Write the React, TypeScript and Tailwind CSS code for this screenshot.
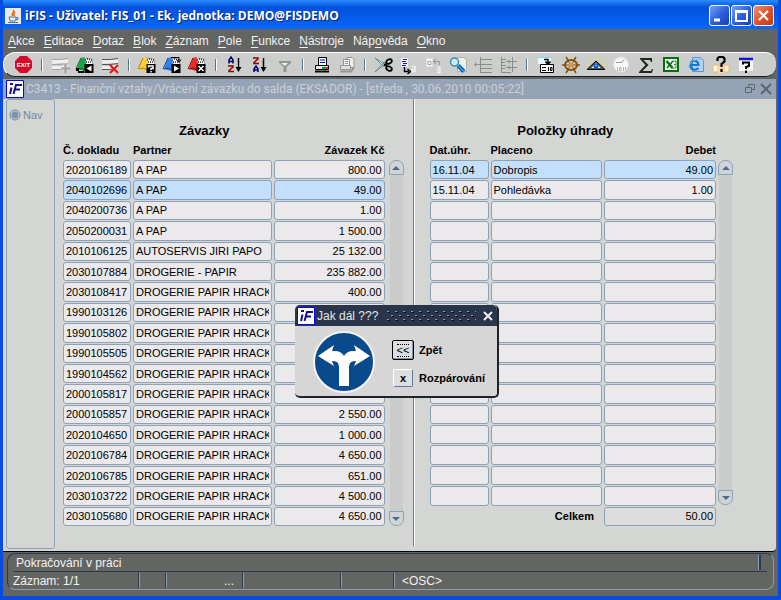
import type { ReactNode } from "react";

type DebtRow = [string, string, string];
type PaymentRow = [string, string, string];

const debts: DebtRow[] = [
  ["2020106189", "A PAP", "800.00"],
  ["2040102696", "A PAP", "49.00"],
  ["2040200736", "A PAP", "1.00"],
  ["2050200031", "A PAP", "1 500.00"],
  ["2010106125", "AUTOSERVIS JIRI PAPO", "25 132.00"],
  ["2030107884", "DROGERIE - PAPIR", "235 882.00"],
  ["2030108417", "DROGERIE PAPIR HRACK AV", "400.00"],
  ["1990103126", "DROGERIE PAPIR HRACK AV", ""],
  ["1990105802", "DROGERIE PAPIR HRACK AV", ""],
  ["1990105505", "DROGERIE PAPIR HRACK AV", ""],
  ["1990104562", "DROGERIE PAPIR HRACK AV", ""],
  ["2000105817", "DROGERIE PAPIR HRACK AV", ""],
  ["2000105857", "DROGERIE PAPIR HRACK AV", "2 550.00"],
  ["2020104650", "DROGERIE PAPIR HRACK AV", "1 000.00"],
  ["2020106784", "DROGERIE PAPIR HRACK AV", "4 650.00"],
  ["2020106785", "DROGERIE PAPIR HRACK AV", "651.00"],
  ["2030103722", "DROGERIE PAPIR HRACK AV", "4 500.00"],
  ["2030105680", "DROGERIE PAPIR HRACK AV", "4 650.00"],
];

const payments: PaymentRow[] = [
  ["16.11.04", "Dobropis", "49.00"],
  ["15.11.04", "Pohledávka", "1.00"],
  ...Array.from({ length: 15 }, () => ["", "", ""] as PaymentRow),
];

// Each menu label with the index of its access key
const menu: [string, number][] = [
  ["Akce", 0],
  ["Editace", 0],
  ["Dotaz", 0],
  ["Blok", 0],
  ["Záznam", 0],
  ["Pole", 0],
  ["Funkce", 0],
  ["Nástroje", 0],
  ["Nápověda", 3],
  ["Okno", 0],
];

function Folder({ color, dark, children }: { color: string; dark: string; children: ReactNode }) {
  return (
    <>
      <path d="M10 3l8 1 1 7-6 4z" fill="#fff" stroke="#555" strokeWidth="0.500" />
      <path d="M11 5h1M13 4h1M15 4.500h1M17 5h1M12 7h1M14 7h1M16 7h1" stroke="#222" strokeWidth="1.500" />
      <path d="M3 14L7 3l3-1 4 12-4 2z" fill={color} />
      <path d="M2 14l5-11M3 14l4-1 4 2" stroke={dark} fill="none" />
      <path d="M10.500 9h9v9h-9z" fill="#000" />
      {children}
    </>
  );
}

function Stripes({ line }: { line: string }) {
  return (
    <>
      <path d="M3 5h8l8-1v4h-8l-8 1zM3 11h8l8-1v4h-9l-7 1z" fill="#efefef" />
      <path d="M3 4.500h8l8-1M3 9.500h8l8-1M3 14.500h8l4-1" stroke={line} fill="none" />
    </>
  );
}

const groups: { name: string; art: ReactNode }[][] = [
  [
    {
      name: "Konec",
      art: (
        <>
          <path d="M8 1h7l5 5v7l-5 5H8l-5-5V6z" fill="#d6082a" />
          <text x="11.500" y="12" fontSize="6" fontWeight="700" textAnchor="middle" fill="#fff">
            EXIT
          </text>
        </>
      ),
    },
  ],
  [
    {
      name: "Nový záznam",
      art: (
        <>
          <Stripes line="#a5a6a5" />
          <path d="M15 8h3v4h4v3h-4v4h-3v-4h-3v-3h3z" fill="#a5a6a5" stroke="#e8e8e8" strokeWidth="0.500" />
        </>
      ),
    },
    {
      name: "Předchozí blok",
      art: (
        <Folder color="#18a649" dark="#086528">
          <path d="M17.500 10.500v6l-5-3z" fill="#fff" />
          <path d="M2 13h3v3h5v2H4v-2H2z" fill="#000" />
        </Folder>
      ),
    },
    {
      name: "Smazat záznam",
      art: (
        <>
          <Stripes line="#525552" />
          <path d="M11 10l8 8M19 10l-8 8" stroke="#ef1010" strokeWidth="2" />
        </>
      ),
    },
  ],
  [
    {
      name: "Zadat dotaz",
      art: (
        <Folder color="#ffcf31" dark="#b57d08">
          <path d="M12.500 12.500V11h4.500v2.500h-2v1.500M15 16v1.500" stroke="#fff" strokeWidth="1.500" fill="none" />
        </Folder>
      ),
    },
    {
      name: "Provést dotaz",
      art: (
        <Folder color="#3182ef" dark="#103c9c">
          <path d="M13 10.500v6l5-3z" fill="#fff" />
          <path d="M10 2.500h8v4m-2.500-2l2.500 3 2-3" stroke="#000" fill="none" />
        </Folder>
      ),
    },
    {
      name: "Zrušit dotaz",
      art: (
        <Folder color="#ef2829" dark="#8c0808">
          <path d="M12.500 11l5 5M17.500 11l-5 5" stroke="#fff" strokeWidth="1.500" />
        </Folder>
      ),
    },
  ],
  [
    {
      name: "Třídit vzestupně",
      art: (
        <>
          <path d="M6 8.500V5l2-3 2 3v3.500M6 6.500h4" stroke="#00006b" strokeWidth="1.500" fill="none" />
          <path d="M5 11h5v1l-4 3.500v1h5" stroke="#8c0000" strokeWidth="1.500" fill="none" />
          <path d="M15.500 3v12" stroke="#000" strokeWidth="1.500" />
          <path d="M12.500 12h6l-3 5z" />
        </>
      ),
    },
    {
      name: "Třídit sestupně",
      art: (
        <>
          <path d="M5 3h5v1L6 7.500v1h5" stroke="#8c0000" strokeWidth="1.500" fill="none" />
          <path d="M6 17v-3l2-3 2 3v3M6 15h4" stroke="#00006b" strokeWidth="1.500" fill="none" />
          <path d="M15.500 3v12" stroke="#000" strokeWidth="1.500" />
          <path d="M12.500 12h6l-3 5z" />
        </>
      ),
    },
    {
      name: "Filtr",
      art: (
        <>
          <path d="M6 6h12v2l-4.500 4v5h-3v-5L6 8z" fill="#949694" />
          <path d="M8 8h7l-3 3z" fill="#efefef" />
        </>
      ),
    },
  ],
  [
    {
      name: "Tisk",
      art: (
        <>
          <path d="M8.500 2.500h8v8h-8z" fill="#fff" stroke="#000" />
          <path d="M10 5h5M10 7.500h5" stroke="#0000b5" />
          <path d="M5.500 10.500h13v4h-13z" fill="#e7e7e7" stroke="#000" />
          <path d="M5 16.500h14" stroke="#000" strokeWidth="2" />
          <path d="M12 12h3v2h-3z" fill="#18a618" />
          <path d="M15 12h3v2h-3z" fill="#ef2020" />
        </>
      ),
    },
    {
      name: "Tisk sestav",
      art: (
        <>
          <path d="M12 2.500h5l2 2v8h-7z" fill="#efefef" stroke="#949694" />
          <path d="M8.500 4.500h6v7h-6z" fill="#f7f7f7" stroke="#949694" />
          <path d="M10 6.500h3M10 8.500h3" stroke="#949694" />
          <path d="M5.500 10.500h10v4h-10z" fill="#dedfde" stroke="#949694" />
          <path d="M5 16.500h11l3-4" stroke="#949694" strokeWidth="2" fill="none" />
        </>
      ),
    },
  ],
  [
    {
      name: "Vyjmout",
      art: (
        <>
          <path d="M3 3l11 7-2 2zM3 17L14 8l-2-1z" fill="#d6f3f7" stroke="#638e94" />
          <path d="M12 9.500l3 1" stroke="#000" strokeWidth="2" />
          <ellipse cx="17" cy="6.500" rx="3" ry="2" transform="rotate(-30 17 6.500)" fill="none" stroke="#000" strokeWidth="1.800" />
          <ellipse cx="17" cy="13.500" rx="3" ry="2" transform="rotate(30 17 13.500)" fill="none" stroke="#000" strokeWidth="1.800" />
        </>
      ),
    },
    {
      name: "Kopírovat",
      art: (
        <>
          <path d="M4 3h7v9H4z" fill="#f0f0ff" />
          <path d="M6 4.500h4M5 6.500h4M6 8.500h4M5 10.500h4" stroke="#1818de" />
          <path d="M7.500 12v4.500H12M10.500 14l3 2.500-3 2.500" stroke="#000" strokeWidth="1.500" fill="none" />
          <path d="M15 11.500h3v5h-3v-2h3" stroke="#efefef" strokeWidth="1.500" fill="none" />
        </>
      ),
    },
    {
      name: "Vložit",
      art: (
        <>
          <path d="M4.500 3.500h6v8h-6z" fill="#f7f7f7" stroke="#dedfde" />
          <path d="M6 6.500h3v3H6z" stroke="#a5a6a5" fill="none" />
          <path d="M17.500 10V6.500H12M14 4l-3 2.500L14 9" stroke="#949694" fill="none" />
          <path d="M15 12.500h3v5h-3M15 15h3" stroke="#efefef" strokeWidth="1.500" fill="none" />
        </>
      ),
    },
    {
      name: "Náhled",
      art: (
        <>
          <path d="M10.500 2.500h6l3 2v12h-9z" fill="#efefe7" stroke="#b5b2a5" />
          <circle cx="7.500" cy="7" r="4" fill="#c6efff" stroke="#428aa5" strokeWidth="1.500" />
          <path d="M11 10.500l6 6" stroke="#0859b5" strokeWidth="4" />
          <path d="M11 10.500l6 6" stroke="#31a6f7" strokeWidth="1.500" />
        </>
      ),
    },
    {
      name: "Seznam",
      art: (
        <path d="M8.500 2v16M8 4.500h12M8 9.500h12M8 13.500h12M8 17.500h12M2 9.500h6M3.500 7.500v4" stroke="#8b8d8b" fill="none" />
      ),
    },
    {
      name: "Strom",
      art: (
        <path d="M4.500 2v16M4 4.500h5M4 7.500h4M4 10.500h5M4 13.500h4M4 17.500h5M15.500 2v15M9 6.500h11M9 12.500h11M9 17.500h5M12 4.500v4M12 10.500v4" stroke="#8b8d8b" fill="none" />
      ),
    },
  ],
  [
    {
      name: "Formulář",
      art: (
        <>
          <path d="M4 2h13v7H4z" fill="#e7f7ff" />
          <path d="M4 2.500h13" stroke="#8cd3f7" />
          <path d="M10 4.500h4v4M11.500 6.500l2.500 3 2.500-3" stroke="#000" strokeWidth="1.500" fill="none" />
          <path d="M6.500 9.500h13v8h-13z" fill="#fff" stroke="#000" />
          <path d="M8 12.500h4M8 15.500h4M14.500 12v4M16.500 12.500h1.500v3h-1.500z" stroke="#000" fill="none" />
        </>
      ),
    },
    {
      name: "Navigace",
      art: (
        <>
          <path d="M3 10h18M7 2l10 16M17 2L7 18" stroke="#84510a" strokeWidth="1.500" />
          <ellipse cx="12" cy="10" rx="6" ry="5" fill="#cccecc" stroke="#84510a" strokeWidth="2" />
          <path d="M7 10h10M9 6l6 8M15 6l-6 8" stroke="#84510a" />
          <circle cx="12" cy="10" r="2" fill="#de9a42" />
        </>
      ),
    },
    {
      name: "Zobrazit",
      art: (
        <>
          <path d="M12 2v3M5 4l3 3M19 4l-3 3M3 9l3 1M21 9l-3 1" stroke="#efdb21" />
          <path d="M3 14.500L12 6l9 8.500z" fill="#52595a" stroke="#000" />
          <path d="M7.500 13L12 8l4.500 5z" fill="#fff" />
          <circle cx="12" cy="11" r="2.500" fill="#0051d6" />
          <circle cx="12" cy="10.500" r="1" fill="#5be0ff" />
        </>
      ),
    },
    {
      name: "Čas",
      art: (
        <>
          <circle cx="12" cy="9.500" r="7.500" fill="#f7f7f7" stroke="#dedfde" />
          <path d="M7 7.500h6l2-3" stroke="#9c9e9c" fill="none" />
          <path d="M8.500 12v4M10.500 12.500H12v3h-1.500zM14.500 12v4M16.500 12v3" stroke="#b5b6b5" fill="none" />
        </>
      ),
    },
    {
      name: "Součet",
      art: (
        <>
          <path d="M6 3h12v4h-1l-1-2H9.500l5 5-6 6H17l1-2h1l-1 4H5v-1l6.500-7L6 4z" fill="#212421" />
        </>
      ),
    },
    {
      name: "Excel",
      art: (
        <>
          <path d="M5 3h14v13H5z" fill="#f0f8f0" stroke="#086d10" strokeWidth="2" />
          <path d="M7.500 6l6 7" stroke="#086d10" strokeWidth="2.500" />
          <path d="M14 6l-6 7" stroke="#086d10" strokeWidth="1.500" />
          <path d="M14 6h3v7h-4M15 9.500h2" stroke="#318a39" fill="none" />
        </>
      ),
    },
    {
      name: "Internet",
      art: (
        <>
          <path d="M8.500 2.500h8l3 3v11h-11z" fill="#b5d3f7" stroke="#6b92c6" />
          <path d="M14.500 13c-3 3-8 2-8-2.500 0-6 8-6 8-.5h-8" fill="none" stroke="#1879c6" strokeWidth="2.200" />
          <path d="M4 13C5 8 11 4 17 4" fill="none" stroke="#7bc3ef" />
        </>
      ),
    },
    {
      name: "Nápověda k poli",
      art: (
        <>
          <path d="M4 10h5v7H4zM15 10h5v7h-5z" fill="#fff3de" stroke="#efb673" />
          <path d="M9 11h6v7H9z" fill="#f7d7a5" />
          <path d="M8.500 6V3.500L10 2h4l1.500 1.500v3L12.500 9v3M12.500 14v3" stroke="#000" strokeWidth="2.200" fill="none" />
        </>
      ),
    },
    {
      name: "Nápověda",
      art: (
        <>
          <path d="M5 3h14v13H5z" fill="#f7f7f7" />
          <path d="M5 4h14" stroke="#1010ce" strokeWidth="2.500" />
          <path d="M9 9.500V7.500h6V11l-3 1v2M12 15.500v2.500" stroke="#000" strokeWidth="2" fill="none" />
        </>
      ),
    },
  ],
];

function Logo() {
  return (
    <svg viewBox="0 0 18 18" className="size-[18px] shrink-0" aria-hidden="true">
      <path d="M.5.5h17v17H.5z" fill="#fff" stroke="#0808e7" />
      <path d="M5.500 7.500L4 14M4 4h3" stroke="#10108c" strokeWidth="2" />
      <path d="M7.500 14l2.500-9h6M9 9.500h5" stroke="#10108c" strokeWidth="2" fill="none" />
    </svg>
  );
}

function WindowButton({ name, close, children }: { name: string; close?: boolean; children: ReactNode }) {
  return (
    <button
      aria-label={name}
      className={`size-[21px] rounded-[3px] border border-white ${
        close
          ? "bg-linear-to-br from-[#f0926f] via-[#e0532c] to-[#c23a12]"
          : "bg-linear-to-br from-[#7a9ef0] via-[#2e5fe0] to-[#1642b8]"
      }`}
    >
      <svg viewBox="0 0 19 19" className="size-full" fill="none" stroke="#fff" strokeWidth="2">
        {children}
      </svg>
    </button>
  );
}

function Cell({ label, value, width, right, active, total }: {
  label: string;
  value: string;
  width: string;
  right?: boolean;
  active?: boolean;
  total?: boolean;
}) {
  return (
    <td className={`flex p-0 ${width}`}>
      <input
        aria-label={label}
        defaultValue={value}
        readOnly={total}
        className={`h-full w-full min-w-0 rounded-[3px] border border-[#8ca2b8] px-[2px] outline-none ${
          right ? "text-right" : ""
        } ${active ? "bg-[#c3dffb]" : total ? "bg-[#dddddd]" : "bg-[#ebe9eb]"}`}
      />
    </td>
  );
}

function Scrollbar({ height }: { height: string }) {
  return (
    <div className={`flex w-[15px] shrink-0 flex-col ${height}`}>
      <button aria-label="Nahoru" className="flex h-[15px] items-center justify-center rounded-t-[7px] border border-[#8ca2b8] bg-[#d0d4d6]">
        <svg viewBox="0 0 8 4" className="h-1 w-2" fill="#4f6b8c">
          <path d="M0 4l4-4 4 4z" />
        </svg>
      </button>
      <div className="mx-px flex-1 bg-[#cacccb]" />
      <button aria-label="Dolů" className="flex h-[15px] items-center justify-center rounded-b-[7px] border border-[#8ca2b8] bg-[#d0d4d6]">
        <svg viewBox="0 0 8 4" className="h-1 w-2" fill="#4f6b8c">
          <path d="M0 0h8L4 4z" />
        </svg>
      </button>
    </div>
  );
}

function StatusCell({ width, children }: { width: string; children?: ReactNode }) {
  return (
    <div className={`flex h-[15px] items-center border-r border-[#8c9cb0] ${width}`}>
      <span className="flex h-full w-full items-center justify-end border-r border-[#2b394f] pr-2">{children}</span>
    </div>
  );
}

const head = "flex gap-[2px] text-left text-[11px] leading-[14px] font-bold";

export default function App() {
  return (
    <div className="relative flex min-h-screen flex-col border-x-[3px] border-b-4 border-[#0a4be0] bg-[#636563] font-['Liberation_Sans',Arial,sans-serif] text-[11px] text-black">
      <header className="flex h-[29px] items-center bg-linear-to-b from-[#2a8cff] via-[#0450dc] via-25% to-[#0568fb] pt-[2px] pr-1 pl-[2px]">
        <svg viewBox="0 0 16 16" className="size-4" aria-hidden="true">
          <path d="M0 0h16v16H0z" fill="#e8eaec" />
          <path d="M8 2c3 2-3 3 0 6M10 4c-2 1-1 2-1 4" stroke="#e76f18" strokeWidth="1.500" fill="none" />
          <path d="M4 9h7v2l-1 2H5zM11 9.500h2v2h-2" stroke="#4a769c" fill="none" />
          <path d="M3 14.500h10" stroke="#4a769c" />
        </svg>
        <h1 className="ml-1 flex-1 font-['Open_Sans','Noto_Sans',sans-serif] text-[12px] font-bold whitespace-nowrap text-white [text-shadow:1px_1px_1px_#06256e]">
          iFIS - Uživatel: FIS_01 - Ek. jednotka: DEMO@FISDEMO
        </h1>
        <div className="flex gap-[1px]">
          <WindowButton name="Minimalizovat"><path d="M4 14h6" strokeWidth="3" /></WindowButton>
          <WindowButton name="Maximalizovat"><path d="M4 5h11v10H4zM4 6h11" /></WindowButton>
          <WindowButton name="Zavřít" close><path d="M5 5l9 9M14 5l-9 9" /></WindowButton>
        </div>
      </header>

      <nav className="flex h-[23px] items-center gap-[9px] pl-[5px] text-[12px] text-[#f2f2f2]">
        {menu.map(([label, key]) => (
          <button key={label}>
            {label.slice(0, key)}
            <u className="underline-offset-2">{label[key]}</u>
            {label.slice(key + 1)}
          </button>
        ))}
      </nav>

      <div role="toolbar" className="mr-[2px] flex h-[25px] items-center rounded-l-[12px] rounded-r-[10px] border-t border-b border-l border-t-white border-b-[#182030] border-l-white bg-[#cccecc] pl-[7px]">
        {groups.map((group, i) => (
          <div key={i} className="flex items-center">
            {i > 0 && (
              <span className="flex w-3 justify-center">
                <span className="h-3 w-[2px] border-r border-l border-r-white border-l-[#5a738c]" />
              </span>
            )}
            {group.map(({ name, art }) => (
              <button key={name} aria-label={name} title={name} className="flex w-[25px] justify-center">
                <svg viewBox="0 0 24 20" className="h-5 w-6">{art}</svg>
              </button>
            ))}
          </div>
        ))}
      </div>

      <div className="mt-[2px] mr-[2px] flex h-5 items-center bg-[#94a3b6] pr-1 pl-[3px]">
        <Logo />
        <h2 className="ml-[2px] flex-1 font-[Roboto,'Liberation_Sans',sans-serif] text-[12px] whitespace-nowrap text-[#cdd1d4]">
          C3413 - Finanční vztahy/Vrácení závazku do salda (EKSADOR) - [středa , 30.06.2010 00:05:22]
        </h2>
        <button aria-label="Obnovit okno">
          <svg viewBox="0 0 12 12" className="size-3" fill="none" stroke="#5f666b">
            <path d="M4.500 4V1.500h6v5H8M1.500 4.500h6v5h-6z" />
          </svg>
        </button>
        <button aria-label="Zavřít okno" className="ml-1">
          <svg viewBox="0 0 12 12" className="size-3" stroke="#5f666b" strokeWidth="2">
            <path d="M1 1l10 10M11 1L1 11" />
          </svg>
        </button>
      </div>

      <main className="mr-[2px] flex flex-1 rounded-br-[4px] border-b border-black bg-[#d4d6d4] pl-[3px]">
        <aside className="mb-[2px] w-[49px] shrink-0 rounded-[3px] border border-[#8ca2b8] pt-[7px] pl-[2px]">
          <button className="flex items-center gap-[2px] text-[#71869c]">
            <svg viewBox="0 0 12 12" className="size-3">
              <circle cx="6" cy="6" r="5" fill="#c8d2dc" stroke="#71869c" />
              <circle cx="6" cy="6" r="3.500" fill="#7f93aa" />
            </svg>
            Nav
          </button>
        </aside>

        <section className="mb-[5px] flex-[340] border-r border-[#777b7b] pt-6 pr-[9px] pl-2">
          <h3 className="mr-[58px] text-center text-[13px] leading-4 font-bold">Závazky</h3>
          <div className="mt-1 flex items-end gap-1">
            <table className="flex min-w-0 flex-1 flex-col">
              <thead>
                <tr className={head}>
                  <th className="w-[68px]">Č. dokladu</th>
                  <th className="flex-1">Partner</th>
                  <th className="w-[111px] text-right">Závazek Kč</th>
                </tr>
              </thead>
              <tbody className="mt-[3px] flex h-[366px] flex-col gap-px">
                {debts.map((r, i) => (
                  <tr key={r[0]} className="flex flex-1 gap-[2px]">
                    <Cell label="Č. dokladu" value={r[0]} width="w-[68px]" active={i === 1} />
                    <Cell label="Partner" value={r[1]} width="flex-1 min-w-0" active={i === 1} />
                    <Cell label="Závazek Kč" value={r[2]} width="w-[111px]" right active={i === 1} />
                  </tr>
                ))}
              </tbody>
            </table>
            <Scrollbar height="h-[366px]" />
          </div>
        </section>

        <section className="mb-[5px] flex-[303] border-l border-white pt-6 pr-[43px] pl-[15px]">
          <h3 className="mr-[32px] text-center text-[13px] leading-4 font-bold">Položky úhrady</h3>
          <div className="mt-1 flex gap-[2px]">
            <table className="flex min-w-0 flex-1 flex-col">
              <thead>
                <tr className={head}>
                  <th className="w-[59px]">Dat.úhr.</th>
                  <th className="flex-1">Placeno</th>
                  <th className="w-[112px] text-right">Debet</th>
                </tr>
              </thead>
              <tbody className="mt-[3px] flex h-[366px] flex-col gap-px">
                {payments.map((r, i) => (
                  <tr key={i} className="flex flex-1 gap-[2px]">
                    <Cell label="Dat.úhr." value={r[0]} width="w-[59px]" active={i === 0} />
                    <Cell label="Placeno" value={r[1]} width="flex-1 min-w-0" active={i === 0} />
                    <Cell label="Debet" value={r[2]} width="w-[112px]" right active={i === 0} />
                  </tr>
                ))}
                <tr className="flex flex-1 gap-[2px]">
                  <th className="flex flex-1 items-center justify-end pr-2">Celkem</th>
                  <Cell label="Celkem" value="50.00" width="w-[112px]" right total />
                </tr>
              </tbody>
            </table>
            <div className="pt-[17px]">
              <Scrollbar height="h-[345px]" />
            </div>
          </div>
        </section>
      </main>

      <footer className="mt-px mr-1 mb-[6px] ml-1 rounded-[8px] border border-t-[#2b394f] border-r-[#8c9cb0] border-b-[#8c9cb0] border-l-[#2b394f] text-[12px] text-[#f2f2f2]">
        <div className="mx-[6px] flex h-[18px] items-center justify-between border-b border-[#2b394f] pr-[6px] pl-[2px]">
          <span>Pokračování v práci</span>
          <span className="h-[15px] w-[3px] border-r-2 border-l border-r-[#2b394f] border-l-[#8c9cb0]" />
        </div>
        <div className="flex h-[17px] items-center pl-[5px]">
          <StatusCell width="w-[127px]">
            <span className="mr-auto">Záznam: 1/1</span>
          </StatusCell>
          <StatusCell width="w-[27px]" />
          <StatusCell width="w-[77px]">...</StatusCell>
          <StatusCell width="w-[98px]" />
          <StatusCell width="w-[53px]" />
          <span className="pl-[7px]">&lt;OSC&gt;</span>
        </div>
      </footer>

      <div role="dialog" aria-label="Jak dál ???" className="absolute top-[305px] left-[292px] w-[204px] rounded-[5px] border-r-2 border-b-2 border-[#20242a] bg-[#d6d6d6]">
        <div className="flex h-[21px] items-center rounded-t-[5px] bg-[#29354a] pr-[3px] pl-[2px] text-[12px] text-[#e6e6e6]">
          <Logo />
          <span className="ml-[2px] w-[69px]">Jak dál ???</span>
          <svg viewBox="0 0 90 12" className="h-3 w-[90px]" aria-hidden="true">
            <defs>
              <pattern id="grip" width="8" height="8" patternUnits="userSpaceOnUse">
                <path d="M1 1h2v1H1zM5 5h2v1H5z" fill="#8c9cb0" />
                <path d="M2 2h2v1H2zM6 6h2v1H6z" fill="#080c14" />
              </pattern>
            </defs>
            <path d="M0 0h90v12H0z" fill="url(#grip)" />
          </svg>
          <button aria-label="Zavřít dialog" className="ml-auto">
            <svg viewBox="0 0 12 12" className="size-3" stroke="#f0f0f0" strokeWidth="2">
              <path d="M2 2l8 8M10 2l-8 8" />
            </svg>
          </button>
        </div>
        <div className="flex h-[70px] items-center pt-px pl-[18px]">
          <svg viewBox="0 0 62 62" className="size-[62px]" aria-hidden="true">
            <circle cx="31" cy="31" r="30" fill="#084a8c" stroke="#f4f4f4" strokeWidth="2" />
            <path d="M26 55V36q0-6-6-6h-1l2 5L5 25l16-11-2 6h3q6 0 9 5 3-5 9-5h3l-2-6 16 11-16 10 2-5h-1q-6 0-6 6v19z" fill="#fff" />
          </svg>
          <div className="ml-[17px] flex flex-col gap-[9px] pt-1 font-bold">
            <label className="flex items-center gap-[5px]">
              <button className="flex h-5 w-[22px] items-center justify-center rounded-[2px] border border-black bg-[#dcdedf] font-normal shadow-[inset_-1px_-1px_#7f93aa]">
                <span className="border-y border-dotted border-black leading-[11px]">&lt;&lt;</span>
              </button>
              Zpět
            </label>
            <label className="flex items-center gap-[5px]">
              <button className="mx-px flex h-[18px] w-5 items-center justify-center rounded-[2px] border border-t-white border-r-[#5f7a9c] border-b-[#5f7a9c] border-l-white bg-[#dcdedf]">
                x
              </button>
              Rozpárování
            </label>
          </div>
        </div>
      </div>
    </div>
  );
}
